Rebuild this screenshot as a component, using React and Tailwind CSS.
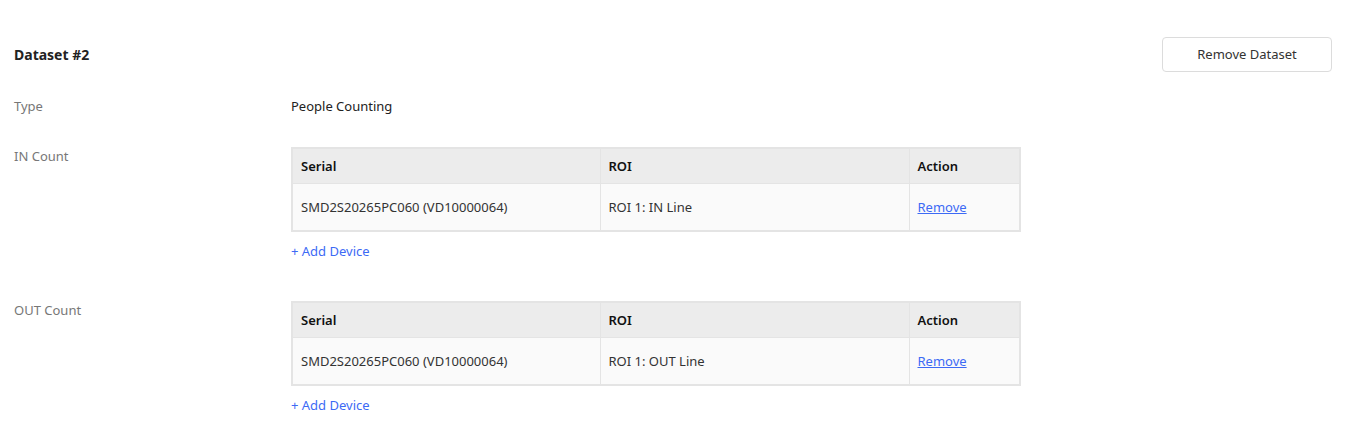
const rows = [
  {
    label: 'IN Count',
    serial: 'SMD2S20265PC060 (VD10000064)',
    roi: 'ROI 1: IN Line',
  },
  {
    label: 'OUT Count',
    serial: 'SMD2S20265PC060 (VD10000064)',
    roi: 'ROI 1: OUT Line',
  },
]

const DeviceTable = ({ serial, roi }) => (
  <div>
    <table className="mt-px w-[730px] border-collapse border-2 border-[#e4e4e4] text-[13px]">
      <thead>
        <tr className="h-[35px] bg-[#ececec] text-left text-[#111]">
          <th className="w-[308px] border-r border-[#e4e4e4] px-2 font-semibold">Serial</th>
          <th className="w-[309px] border-r border-[#e4e4e4] px-2 font-semibold">ROI</th>
          <th className="px-2 font-semibold">Action</th>
        </tr>
      </thead>
      <tbody>
        <tr className="h-[48px] bg-[#fafafa] text-[#333]">
          <td className="border-r border-t border-[#e4e4e4] px-2">{serial}</td>
          <td className="border-r border-t border-[#e4e4e4] px-2">{roi}</td>
          <td className="border-t border-[#e4e4e4] px-2">
            <a href="#" className="text-[#3d6af5] underline">Remove</a>
          </td>
        </tr>
      </tbody>
    </table>
    <button className="mt-[9px] h-5 text-[13px] leading-5 text-[#3d6af5]">+ Add Device</button>
  </div>
)

export default function App() {
  return (
    <div className="min-h-screen bg-white pl-[14px] pr-6 pt-[37px] font-['Noto_Sans',sans-serif]">
      <div className="flex items-center justify-between">
        <h2 className="text-sm font-bold text-[#222]">Dataset #2</h2>
        <button className="h-[35px] w-[170px] rounded border border-[#dcdcdc] bg-white text-[13px] text-[#333]">
          Remove Dataset
        </button>
      </div>

      <div className="mt-6 grid grid-cols-[277px_1fr] text-[13px] leading-5">
        <div className="text-[#777]">Type</div>
        <div className="text-[#222]">People Counting</div>
      </div>

      <div className="mt-[30px] flex flex-col gap-[39px]">
        {rows.map((row) => (
          <div key={row.label} className="grid grid-cols-[277px_1fr] text-[13px] leading-5">
            <div className="text-[#777]">{row.label}</div>
            <DeviceTable serial={row.serial} roi={row.roi} />
          </div>
        ))}
      </div>
    </div>
  )
}
